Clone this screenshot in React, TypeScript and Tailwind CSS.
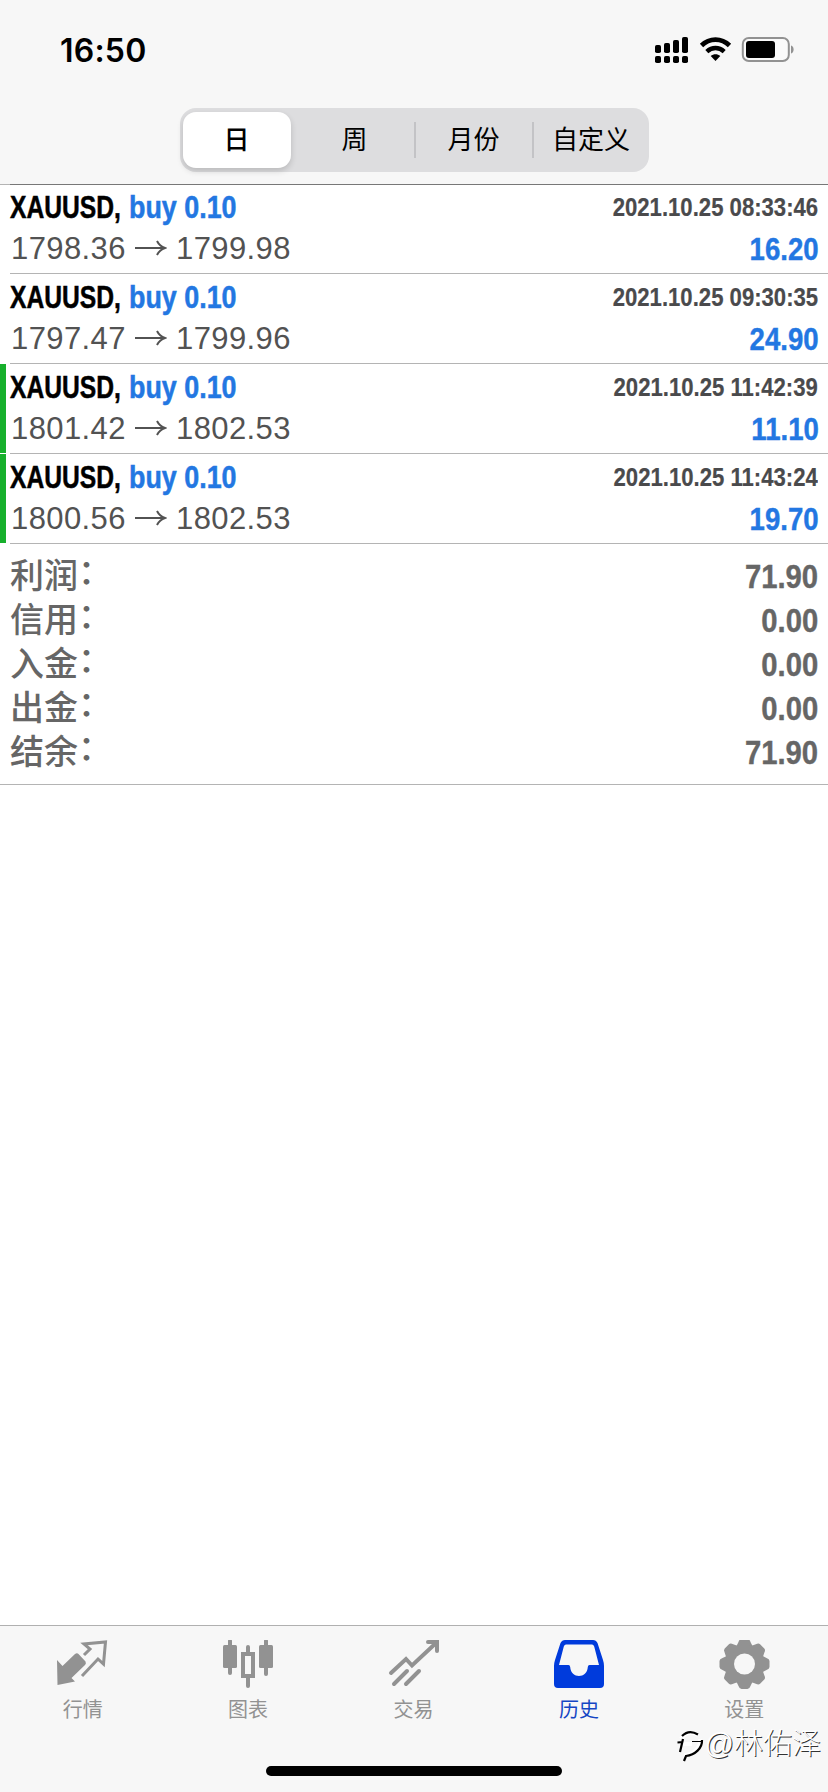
import React from "react";

type Deal = { open: string; close: string; time: string; profit: string; marked?: boolean };

const deals: Deal[] = [
  { open: "1798.36", close: "1799.98", time: "2021.10.25 08:33:46", profit: "16.20" },
  { open: "1797.47", close: "1799.96", time: "2021.10.25 09:30:35", profit: "24.90" },
  { open: "1801.42", close: "1802.53", time: "2021.10.25 11:42:39", profit: "11.10", marked: true },
  { open: "1800.56", close: "1802.53", time: "2021.10.25 11:43:24", profit: "19.70", marked: true },
];

const summary = [
  ["利润", "71.90"],
  ["信用", "0.00"],
  ["入金", "0.00"],
  ["出金", "0.00"],
  ["结余", "71.90"],
];

function StatusBar() {
  return (
    <div className="flex h-[108px] items-start justify-between pl-[60px] pr-[33px]">
      <span className="mt-[31px] font-['Inter',sans-serif] text-[32px] font-semibold leading-[40px] tracking-[0.2px] text-black">16:50</span>
      <div className="mt-[36px] flex">
        <svg width="34" height="28" viewBox="0 0 34 28" className="mr-[10px]">
          <rect x="0" y="9" width="6" height="8" rx="1.8" />
          <rect x="9" y="7" width="6" height="10" rx="1.8" />
          <rect x="18" y="4" width="6" height="13" rx="1.8" />
          <rect x="27" y="1" width="6" height="16" rx="1.8" />
          <rect x="0" y="20" width="6" height="7" rx="1.8" />
          <rect x="9" y="20" width="6" height="7" rx="1.8" />
          <rect x="18" y="20" width="6" height="7" rx="1.8" />
          <rect x="27" y="20" width="6" height="7" rx="1.8" />
        </svg>
        <svg width="34" height="28" viewBox="0 0 34 28" className="mr-[8px]">
          <path d="M2.500 9.500C10.500 1.700 22.500 1.700 30.500 9.500" fill="none" stroke="#000" strokeWidth="4.800" />
          <path d="M7.800 15.600C13 10.800 20 10.800 25.200 15.600" fill="none" stroke="#000" strokeWidth="4.400" />
          <path d="M11.700 20C14.600 17.600 18.400 17.600 21.300 20L16.500 25Z" />
        </svg>
        <svg width="54" height="28" viewBox="0 0 54 28">
          <rect x="1.800" y="2" width="46" height="23" rx="6" fill="#fafafa" stroke="#929292" strokeWidth="2" />
          <rect x="5" y="5" width="29" height="17" rx="3" />
          <path d="M50 9.500C53.500 10.500 53.500 16.500 50 17.500Z" fill="#929292" />
        </svg>
      </div>
    </div>
  );
}

function Segments() {
  return (
    <div className="mx-auto flex h-[64px] w-[469px] items-center rounded-[16px] bg-[#dddddf] px-[3px] text-[26px] text-black">
      <div className="flex h-[56px] w-[108px] shrink-0 items-center justify-center rounded-[13px] bg-white font-medium shadow-[0_3px_6px_rgba(0,0,0,0.16)]">日</div>
      <div className="flex h-full w-[123px] shrink-0 items-center justify-center pl-[5px]">周</div>
      <div className="h-[36px] w-[2px] shrink-0 bg-[#c3c3c6]" />
      <div className="flex h-full w-[116px] shrink-0 items-center justify-center">月份</div>
      <div className="h-[36px] w-[2px] shrink-0 bg-[#c3c3c6]" />
      <div className="flex h-full flex-1 items-center justify-center whitespace-nowrap pl-[3px]">自定义</div>
    </div>
  );
}

function DealRow({ deal }: { deal: Deal }) {
  return (
    <div className="flex h-[90px]">
      <div className={deal.marked ? "h-[89px] w-[6px] bg-[#17b02c]" : "h-[89px] w-[6px]"} />
      <div className="ml-[4px] flex flex-1 flex-col border-b border-[#b4b4b4] pr-[10px] pt-[3px]">
        <div className="flex h-[41px] items-center justify-between font-bold">
          <div className="flex whitespace-pre pb-[2px] text-[32px] [-webkit-text-stroke:0.5px_currentColor]">
            <span className="w-[119px] origin-left scale-x-[0.77] text-black">XAUUSD,</span>
            <span className="origin-left scale-x-[0.84] text-[#2377e2]">buy 0.10</span>
          </div>
          <span className="origin-right scale-x-[0.885] pt-px text-[25px] text-[#4a4a4c] [-webkit-text-stroke:0.2px_currentColor]">{deal.time}</span>
        </div>
        <div className="flex h-[42px] items-center justify-between">
          <div className="flex items-center text-[31px] tracking-[0.4px] text-[#525252]">
            <span className="ml-px w-[114px]">{deal.open}</span>
            <svg width="32" height="20" viewBox="0 0 32 20" className="ml-[10px] mr-[9px]" fill="none" stroke="#525252" strokeWidth="2">
              <path d="M0 9H29M22 2Q24.500 7 30 9Q24.500 11 22 16" />
            </svg>
            <span>{deal.close}</span>
          </div>
          <span className="-mr-px origin-right scale-x-[0.89] pt-[2px] text-[31px] font-bold text-[#2377e2] [-webkit-text-stroke:0.4px_currentColor]">{deal.profit}</span>
        </div>
      </div>
    </div>
  );
}

function Quotes() {
  return (
    <svg width="52" height="50" viewBox="0 0 52 50" fill="#929292">
      <path d="M0 20L5.500 26L18 14Q20 12.500 21.500 14L28.500 21.500Q29.500 23.500 28 25L14.500 38L18 41.500L0.500 45Z" />
      <path d="M27 15L33 9L27 4L48.500 2L46.500 24L41 19L25 36" fill="none" stroke="#929292" strokeWidth="3" />
    </svg>
  );
}

function Candles() {
  return (
    <svg width="52" height="50" viewBox="0 0 52 50" fill="#929292">
      <rect x="6" y="-1" width="4" height="36" rx="2" />
      <rect x="1" y="5" width="14" height="23" rx="1.500" />
      <rect x="24" y="5" width="4" height="43" rx="2" />
      <rect x="21" y="14" width="10" height="22" fill="#f7f7f7" stroke="#929292" strokeWidth="4" />
      <rect x="42" y="-1" width="4" height="37" rx="2" />
      <rect x="37" y="5" width="14" height="23" rx="1.500" />
    </svg>
  );
}

function Trade() {
  return (
    <svg width="52" height="50" viewBox="0 0 52 50" fill="none" stroke="#929292" strokeWidth="4" strokeLinecap="round">
      <path d="M3 33L18 19L24 25.500L48 3" />
      <path d="M40 2H49V11" />
      <path d="M6 44L19 31M18 44L31 31" />
    </svg>
  );
}

function History() {
  return (
    <svg width="52" height="50" viewBox="0 0 52 50">
      <path d="M12 0H40Q43 0 44.500 3L50 20Q51 23 51 26V44Q51 48 47 48H5Q1 48 1 44V26Q1 23 2 20L7.500 3Q9 0 12 0Z" fill="#003bdc" />
      <path d="M13 4.500H39Q40.500 4.500 41.200 6.500L46 25H36.500Q35 25 34.800 27C34.200 39 17.800 39 17.200 27Q17 25 15.500 25H6L10.800 6.500Q11.500 4.500 13 4.500Z" fill="#f7f7f7" />
    </svg>
  );
}

function Settings() {
  return (
    <svg width="52" height="50" viewBox="0 0 52 50">
      <g transform="translate(26.500 24)" fill="#929292">
        <circle r="19" />
        {[0, 45, 90, 135, 180, 225, 270, 315].map((a) => (
          <path key={a} d="M-9.500 -16Q-7.500 -18.500 -6 -22Q-5 -25 -3 -25H3Q5 -25 6 -22Q7.500 -18.500 9.500 -16Z" transform={`rotate(${a})`} />
        ))}
        <circle r="10.500" fill="#f7f7f7" />
      </g>
    </svg>
  );
}

const tabs = [
  { label: "行情", icon: <Quotes /> },
  { label: "图表", icon: <Candles /> },
  { label: "交易", icon: <Trade /> },
  { label: "历史", icon: <History />, active: true },
  { label: "设置", icon: <Settings /> },
];

function Watermark() {
  return (
    <div className="absolute right-[7px] top-[100px] flex items-center text-white">
      <svg width="30" height="36" viewBox="0 0 30 36" fill="none">
        <g stroke="#fff" strokeWidth="4">
          <path d="M6 13Q13 3 23 9M25 13C26 22 18 29 9 29M8 18H17" />
        </g>
        <g stroke="#000" strokeWidth="2.200">
          <path d="M5 26L8 13M2.500 16.500L8 16M7 10Q14 3 23 8.500M27 14C27.500 22 20 29 11 30L9 35" />
          <path d="M17 15.500H26" strokeWidth="1" />
        </g>
      </svg>
      <span className="text-[29px] font-light leading-[34px] [text-shadow:1px_1px_0_#333]">@林佑泽</span>
    </div>
  );
}

export default function App() {
  return (
    <div className="flex h-[1792px] w-[828px] flex-col overflow-hidden bg-white font-['Liberation_Sans','Noto_Sans_CJK_SC',sans-serif]">
      <header className="h-[184px] shrink-0 bg-[#f7f7f7]">
        <StatusBar />
        <Segments />
      </header>
      <div className="flex h-px shrink-0 bg-[#777]">
        <div className="w-[10px] bg-[#b4b4b4]" />
      </div>
      <main className="flex-1 pt-px">
        <div className="-mt-[2px]">
          {deals.map((d) => (
            <DealRow key={d.time} deal={d} />
          ))}
        </div>
        <div className="flex h-[241px] flex-col border-b border-[#b4b4b4] pl-[10px] pr-[10px] pt-[10px] text-[34px] text-[#666]">
          {summary.map(([label, value]) => (
            <div key={label} className="flex h-[44px] items-center justify-between">
              <span className="flex font-medium">
                <span>{label}</span>
                <span className="-translate-y-[4px]">：</span>
              </span>
              <span className="origin-right scale-x-[0.86] font-bold [-webkit-text-stroke:0.4px_currentColor]">{value}</span>
            </div>
          ))}
        </div>
      </main>
      <nav className="relative flex h-[167px] shrink-0 flex-col items-center justify-between border-t border-[#b0b0b0] bg-[#f7f7f7] pb-[16px]">
        <div className="flex w-full pr-px pt-[14px]">
          {tabs.map((t) => (
            <div key={t.label} className={t.active ? "flex flex-1 flex-col items-center text-[#1546c4]" : "flex flex-1 flex-col items-center text-[#929292]"}>
              {t.icon}
              <span className="mt-[6px] text-[20px] leading-[28px]">{t.label}</span>
            </div>
          ))}
        </div>
        <div className="h-[10px] w-[296px] rounded-full bg-black" />
        <Watermark />
      </nav>
    </div>
  );
}
